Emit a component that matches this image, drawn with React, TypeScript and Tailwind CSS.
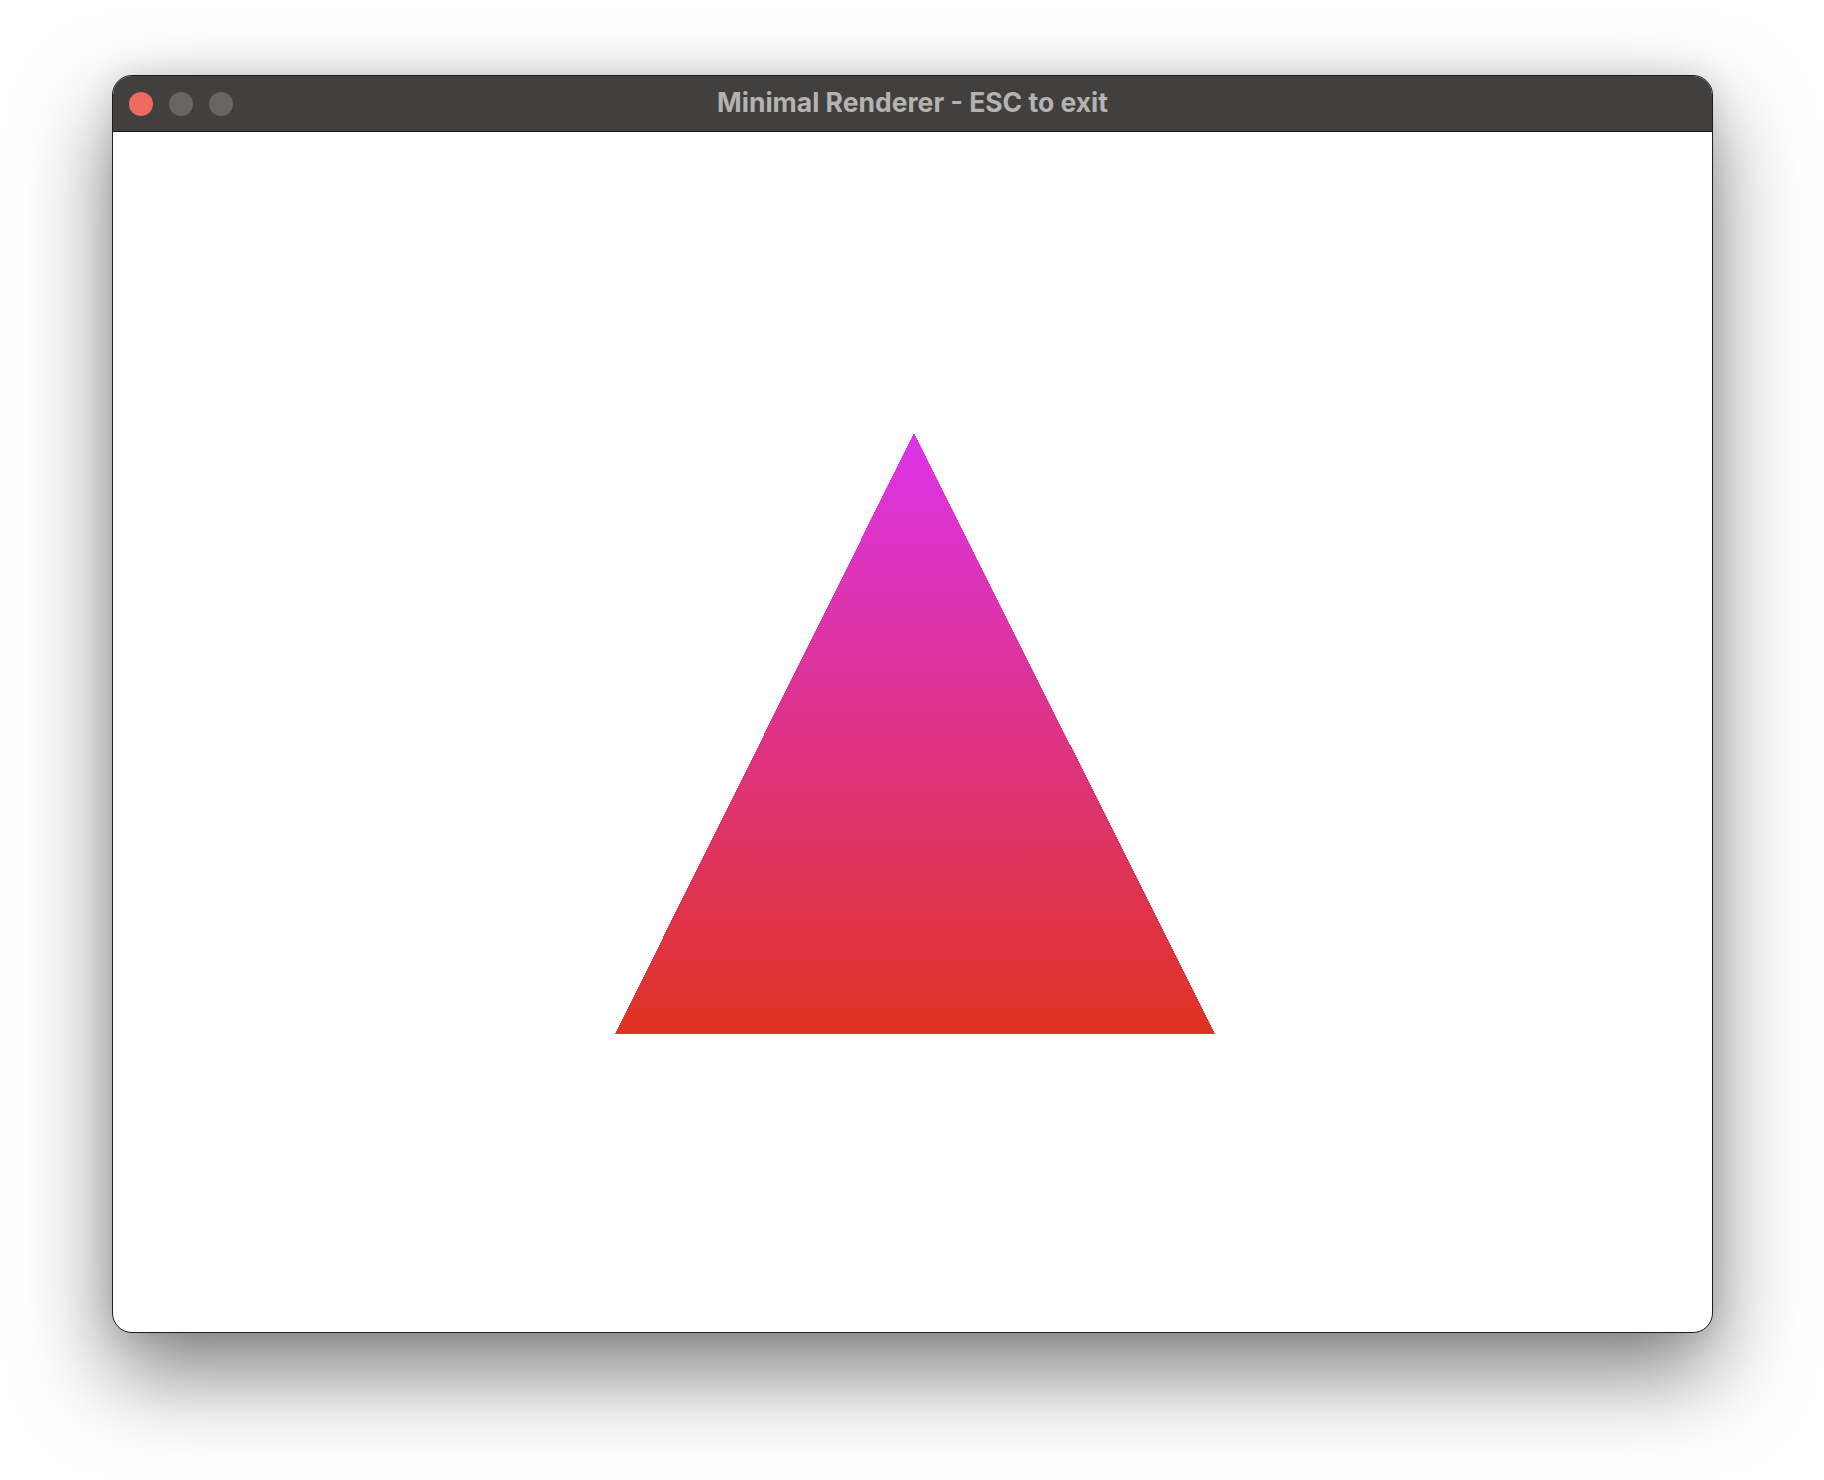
import React from "react";

function TrafficLights() {
  return (
    <div className="flex items-center gap-4 pl-4">
      <span className="w-6 h-6 rounded-full bg-[#ee6a5e]" />
      <span className="w-6 h-6 rounded-full bg-[#676665]" />
      <span className="w-6 h-6 rounded-full bg-[#676665]" />
    </div>
  );
}

function Triangle() {
  return (
    <svg width="1600" height="1200" viewBox="0 0 1600 1200" className="block">
      <defs>
        <linearGradient id="tri" x1="0" y1="0" x2="0" y2="1">
          <stop offset="0" stopColor="#dc33ea" />
          <stop offset="0.5" stopColor="#de3386" />
          <stop offset="1" stopColor="#df3322" />
        </linearGradient>
      </defs>
      <polygon
        points="801,301 1102,902 502,902"
        fill="url(#tri)"
        shapeRendering="crispEdges"
      />
    </svg>
  );
}

export default function App() {
  return (
    <div className="min-h-screen bg-white pl-[112px] pt-[75px]">
      <div className="w-[1601px] rounded-[20px] overflow-hidden border border-[#1c1c1c] bg-white shadow-[0_40px_90px_rgba(0,0,0,0.5),0_0_30px_rgba(0,0,0,0.12)]">
        <div className="relative h-[56px] bg-[#42403e] border-b border-[#111] flex items-center">
          <TrafficLights />
          <div className="absolute inset-0 flex items-center justify-center pb-[2px]">
            <span className="text-[26.5px] font-bold text-[#b4b3b2] font-['Inter',sans-serif]">
              Minimal Renderer - ESC to exit
            </span>
          </div>
        </div>
        <Triangle />
      </div>
    </div>
  );
}
